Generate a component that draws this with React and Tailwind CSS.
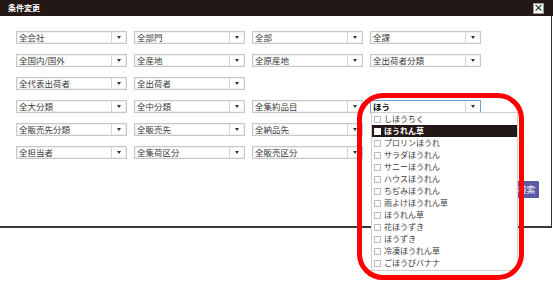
const font = { fontFamily: "'Noto Sans CJK JP', 'Noto Sans', sans-serif" };

const rows = [
  ["全会社", "全部門", "全部", "全課"],
  ["全国内/国外", "全産地", "全原産地", "全出荷者分類"],
  ["全代表出荷者", "全出荷者", "", ""],
  ["全大分類", "全中分類", "全集約品目", "*"],
  ["全販売先分類", "全販売先", "全納品先", ""],
  ["全担当者", "全集荷区分", "全販売区分", ""],
];

const options = [
  "しほうちく",
  "ほうれん草",
  "プロリンほうれ",
  "サラダほうれん",
  "サニーほうれん",
  "ハウスほうれん",
  "ちぢみほうれん",
  "雨よけほうれん草",
  "ほうれん草",
  "花ほうずき",
  "ほうずき",
  "冷凍ほうれん草",
  "ごほうびバナナ",
];

const Select = ({ label, active }) => (
  <div
    className={`flex h-[13px] bg-white border ${
      active ? "border-[#6f9fd6]" : "border-[#c8c8c8] shadow-[inset_0_0_0_1px_#f0f0f0]"
    }`}
  >
    <div
      className={`flex-1 pl-[2px] text-[8.5px] leading-[11px] whitespace-nowrap overflow-hidden ${
        active ? "text-black font-bold" : "text-[#3a3a3a]"
      }`}
    >
      {label}
    </div>
    <div className="w-[15px] border-l border-[#d6d6d6] flex items-center justify-center">
      <span className="block w-0 h-0 border-x-[2.5px] border-t-[3px] border-x-transparent border-t-[#333]" />
    </div>
  </div>
);

export default function App() {
  return (
    <div className="relative w-[553px] h-[283px] bg-white overflow-hidden" style={font}>
      {/* Title bar */}
      <div className="h-[16px] bg-[#231815] flex items-center justify-between pl-[8px] pr-[9px]">
        <span className="text-white font-bold text-[8px] leading-none">条件変更</span>
        <span className="w-[11px] h-[11px] bg-white border border-[#999] flex items-center justify-center text-[#222] font-bold text-[10px] leading-none">
          ×
        </span>
      </div>

      {/* Body */}
      <div className="w-[552px] h-[212px] border-r border-b-2 border-r-[#333] border-b-[#3a3a3a] pl-[16px] pt-[15px] pr-[12px]">
        <div className="grid grid-cols-[repeat(4,111px)] gap-x-[7px] gap-y-[10px]">
          {rows.flat().map((label, i) =>
            label === "" ? (
              <div key={i} className="h-[13px]" />
            ) : label === "*" ? (
              <Select key={i} label="ほう" active />
            ) : (
              <Select key={i} label={label} />
            )
          )}
        </div>
        <div className="flex justify-end mt-[22px]">
          <button className="h-[17px] w-[25px] bg-[#5a5aa5] text-white text-[9px] leading-none rounded-[1px]">
            検索
          </button>
        </div>
      </div>

      {/* Open dropdown list */}
      <div className="absolute left-[371px] top-[112px] w-[147px] bg-white border border-[#cfcfcf] pb-[1px]">
        {options.map((o, i) => {
          const hi = i === 1;
          return (
            <div
              key={i}
              className={`h-[12px] flex items-center gap-[3px] pl-[2px] ${
                hi ? "bg-[#231815] text-white font-bold" : "text-[#3a3a3a]"
              }`}
            >
              <span
                className={`w-[7px] h-[7px] ${
                  hi ? "bg-white" : "bg-white border border-[#bdbdbd]"
                }`}
              />
              <span className="text-[8px] leading-none whitespace-nowrap">{o}</span>
            </div>
          );
        })}
      </div>

      {/* Red annotation */}
      <div className="absolute left-[357px] top-[93px] w-[167px] h-[187px] border-[5px] border-[#ff0000] rounded-[26px] pointer-events-none" />
    </div>
  );
}
